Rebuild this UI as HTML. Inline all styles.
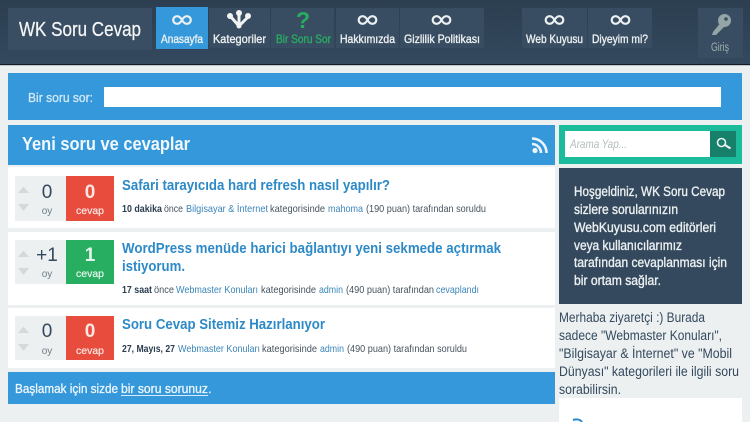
<!DOCTYPE html>
<html lang="tr"><head><meta charset="utf-8"><title>WK Soru Cevap</title>
<style>
html,body{margin:0;padding:0;width:750px;height:422px;overflow:hidden;background:#ecf0f1}
svg{display:block}
text{font-family:"Liberation Sans",sans-serif;white-space:pre}
.n{font-size:12px;fill:#ecf0f1;stroke:#ecf0f1;stroke-width:.35px}
.m{font-size:10.5px;fill:#45535f}
.mb{font-size:10.5px;font-weight:bold;fill:#2c3e50}
.l{font-size:10.5px;fill:#3a85b8}
.t{font-size:14.5px;font-weight:bold;fill:#2d8ac7}
.w{font-size:13.5px;fill:#ecf0f1;stroke:#ecf0f1;stroke-width:.35px}
.p{font-size:13.5px;fill:#34495e}
.c{font-size:19px;fill:#34495e;text-anchor:middle}
.o{font-size:10px;fill:#6d7b88;text-anchor:middle}
.a{fill:#d5d9db}
.b{font-size:13px;fill:#eef6fc;stroke:#eef6fc;stroke-width:.3px}
</style></head><body>
<svg xmlns="http://www.w3.org/2000/svg" width="750" height="422" viewBox="0 0 750 422">
<defs>
<linearGradient id="h" x1="0" y1="0" x2="0" y2="1"><stop offset="0" stop-color="#2c3e50"/><stop offset="1" stop-color="#34495e"/></linearGradient>
<g id="inf" fill="none" stroke="currentColor" stroke-width="2.200"><path d="M0 0C-2-3.600-3.600-3.800-5-3.800A3.800 3.800 0 0 0-5 3.800C-3.600 3.800-2 3.600 0 0C2-3.600 3.600-3.800 5-3.800A3.800 3.800 0 0 1 5 3.800C3.600 3.800 2 3.600 0 0Z"/></g>
</defs>
<rect width="750" height="422" fill="#ecf0f1"/>
<!-- header -->
<rect width="750" height="64" fill="url(#h)"/>
<rect y="64" width="750" height="1.2" fill="#141d27"/>
<rect x="8" y="8" width="144" height="42" fill="#3a4e63"/>
<text x="19" y="36" font-size="20" fill="#f4f6f6" stroke="#f4f6f6" stroke-width=".25" textLength="122" lengthAdjust="spacingAndGlyphs">WK Soru Cevap</text>
<g fill="#394d62">
<rect x="209" y="8" width="61" height="40"/><rect x="271" y="8" width="63" height="40"/><rect x="336" y="8" width="63" height="40"/><rect x="400" y="8" width="84" height="40"/><rect x="522" y="8" width="65" height="40"/><rect x="588" y="8" width="64" height="40"/><rect x="698" y="8" width="45" height="50"/>
</g>
<rect x="156" y="7" width="52" height="42" fill="#3498db"/>
<g color="#ecf0f1">
<use href="#inf" x="182" y="20"/><use href="#inf" x="367.500" y="20"/><use href="#inf" x="441.500" y="20"/><use href="#inf" x="554.500" y="20"/><use href="#inf" x="620.500" y="20"/>
</g>
<!-- tree icon -->
<g fill="#f2f4f4" stroke="#f2f4f4">
<path d="M239 14V26M231 17L239 26L248 17" fill="none" stroke-width="3"/>
<circle cx="239" cy="13" r="3" stroke="none"/><circle cx="230" cy="16" r="3" stroke="none"/><circle cx="248" cy="16" r="3" stroke="none"/><circle cx="239" cy="26" r="2.500" stroke="none"/>
</g>
<text x="303" y="28" font-size="23" font-weight="bold" fill="#27ae60" text-anchor="middle">?</text>
<!-- key -->
<g fill="#95a5a6"><path d="M713 32L722 21L726 25L716 35L712 35Z"/><circle cx="724.500" cy="20.500" r="6.500"/></g><circle cx="726" cy="19" r="1.800" fill="#394d62"/>
<text class="n" x="161" y="43" textLength="42" lengthAdjust="spacingAndGlyphs">Anasayfa</text>
<text class="n" x="213" y="43" textLength="53" lengthAdjust="spacingAndGlyphs">Kategoriler</text>
<text class="n" x="276" y="43" textLength="55" lengthAdjust="spacingAndGlyphs" style="fill:#27ae60;stroke:#27ae60">Bir Soru Sor</text>
<text class="n" x="340" y="43" textLength="55" lengthAdjust="spacingAndGlyphs">Hakkımızda</text>
<text class="n" x="404" y="43" textLength="76" lengthAdjust="spacingAndGlyphs">Gizlilik Politikası</text>
<text class="n" x="526" y="43" textLength="57" lengthAdjust="spacingAndGlyphs">Web Kuyusu</text>
<text class="n" x="592" y="43" textLength="56" lengthAdjust="spacingAndGlyphs">Diyeyim mi?</text>
<text x="711" y="51" font-size="11.500" fill="#a3b1b3" textLength="18" lengthAdjust="spacingAndGlyphs">Giriş</text>
<!-- ask bar -->
<rect x="8" y="73" width="734" height="47" fill="#3498db"/>
<text x="28" y="102" font-size="13" fill="#d4e8f6" stroke="#d4e8f6" stroke-width=".3" textLength="65" lengthAdjust="spacingAndGlyphs">Bir soru sor:</text>
<rect x="104" y="87" width="617" height="20" fill="#fff"/>
<!-- heading -->
<rect x="8" y="125" width="547" height="40" fill="#3498db"/>
<text x="22" y="150" font-size="18" font-weight="bold" fill="#f2f8fc" textLength="168" lengthAdjust="spacingAndGlyphs">Yeni soru ve cevaplar</text>
<g fill="none" stroke="#ecf4fa" stroke-width="2.600"><path d="M532 144A9 9 0 0 1 541 153"/><path d="M532 138.500A14.500 14.500 0 0 1 546.500 153"/></g><circle cx="535" cy="150.500" r="2.600" fill="#ecf4fa"/>
<!-- rows -->
<g fill="#fff"><rect x="8" y="167" width="547" height="61"/><rect x="8" y="232" width="547" height="73"/><rect x="8" y="308" width="547" height="60"/></g>
<g fill="#ecf0f1"><rect x="15" y="176" width="51" height="45"/><rect x="15" y="240" width="51" height="44"/><rect x="15" y="316" width="51" height="44"/></g>
<rect x="66" y="176" width="48" height="45" fill="#e74c3c"/><rect x="66" y="240" width="48" height="44" fill="#27ae60"/><rect x="66" y="316" width="48" height="44" fill="#e74c3c"/>
<g class="a">
<path d="M18 193L23.500 186.500L29 193ZM18 204L29 204L23.500 211Z"/>
<path d="M18 257L23.500 250.500L29 257ZM18 268L29 268L23.500 275Z"/>
<path d="M18 333L23.500 326.500L29 333ZM18 344L29 344L23.500 351Z"/>
</g>
<text class="c" x="47" y="198">0</text><text class="o" x="47" y="214">oy</text>
<text class="c" x="47" y="261">+1</text><text class="o" x="47" y="277">oy</text>
<text class="c" x="47" y="337">0</text><text class="o" x="47" y="354">oy</text>
<g fill="#fbe6e3" text-anchor="middle">
<text x="90" y="198" font-size="19" font-weight="bold">0</text><text x="90" y="214" font-size="10.500" stroke="#fbe6e3" stroke-width=".2">cevap</text>
<text x="90" y="261" font-size="19" font-weight="bold" fill="#e3f5ea">1</text><text x="90" y="277" font-size="10.500" fill="#e3f5ea" stroke="#e3f5ea" stroke-width=".2">cevap</text>
<text x="90" y="337" font-size="19" font-weight="bold">0</text><text x="90" y="354" font-size="10.500" stroke="#fbe6e3" stroke-width=".2">cevap</text>
</g>
<text class="t" x="122" y="190" textLength="268" lengthAdjust="spacingAndGlyphs">Safari tarayıcıda hard refresh nasıl yapılır?</text>
<text class="t" x="122" y="253" textLength="379" lengthAdjust="spacingAndGlyphs">WordPress menüde harici bağlantıyı yeni sekmede açtırmak</text>
<text class="t" x="122" y="271" textLength="63" lengthAdjust="spacingAndGlyphs">istiyorum.</text>
<text class="t" x="122" y="329" textLength="203" lengthAdjust="spacingAndGlyphs">Soru Cevap Sitemiz Hazırlanıyor</text>
<!-- meta 1 -->
<text class="mb" x="122" y="212" textLength="40" lengthAdjust="spacingAndGlyphs">10 dakika</text>
<text class="m" x="164" y="212" textLength="19" lengthAdjust="spacingAndGlyphs">önce</text>
<text class="l" x="186" y="212" textLength="82" lengthAdjust="spacingAndGlyphs">Bilgisayar &amp; İnternet</text>
<text class="m" x="270" y="212" textLength="55" lengthAdjust="spacingAndGlyphs">kategorisinde</text>
<text class="l" x="328" y="212" textLength="35" lengthAdjust="spacingAndGlyphs">mahoma</text>
<text class="m" x="366" y="212" textLength="120" lengthAdjust="spacingAndGlyphs">(190 puan) tarafından soruldu</text>
<!-- meta 2 -->
<text class="mb" x="122" y="293" textLength="30" lengthAdjust="spacingAndGlyphs">17 saat</text>
<text class="m" x="154" y="293" textLength="20" lengthAdjust="spacingAndGlyphs">önce</text>
<text class="l" x="176" y="293" textLength="82" lengthAdjust="spacingAndGlyphs">Webmaster Konuları</text>
<text class="m" x="261" y="293" textLength="55" lengthAdjust="spacingAndGlyphs">kategorisinde</text>
<text class="l" x="319" y="293" textLength="24" lengthAdjust="spacingAndGlyphs">admin</text>
<text class="m" x="346" y="293" textLength="88" lengthAdjust="spacingAndGlyphs">(490 puan) tarafından</text>
<text class="l" x="436" y="293" textLength="43" lengthAdjust="spacingAndGlyphs">cevaplandı</text>
<!-- meta 3 -->
<text class="mb" x="122" y="352" textLength="53" lengthAdjust="spacingAndGlyphs">27, Mayıs, 27</text>
<text class="l" x="178" y="352" textLength="82" lengthAdjust="spacingAndGlyphs">Webmaster Konuları</text>
<text class="m" x="262" y="352" textLength="55" lengthAdjust="spacingAndGlyphs">kategorisinde</text>
<text class="l" x="320" y="352" textLength="24" lengthAdjust="spacingAndGlyphs">admin</text>
<text class="m" x="347" y="352" textLength="120" lengthAdjust="spacingAndGlyphs">(490 puan) tarafından soruldu</text>
<!-- bottom bar -->
<rect x="8" y="372" width="547" height="32" fill="#3498db"/>
<text class="b" x="15" y="393" textLength="103" lengthAdjust="spacingAndGlyphs">Başlamak için sizde</text>
<text class="b" x="121" y="393" textLength="87" lengthAdjust="spacingAndGlyphs">bir soru sorunuz</text>
<text class="b" x="208" y="393">.</text>
<rect x="121" y="395" width="87" height="1" fill="#d7eaf8"/>
<!-- search -->
<rect x="559" y="125" width="183" height="39" fill="#1abc9c"/>
<rect x="565" y="131" width="145" height="26" fill="#fff"/>
<rect x="710" y="131" width="26" height="26" fill="#16806a"/>
<text x="570" y="148" font-size="11.500" font-style="italic" fill="#b4bcbe" textLength="57" lengthAdjust="spacingAndGlyphs">Arama Yap...</text>
<circle cx="721.500" cy="142.500" r="4" fill="none" stroke="#ecf0f1" stroke-width="1.600"/><path d="M725 145L730.500 148.500" stroke="#ecf0f1" stroke-width="2.200"/>
<!-- welcome -->
<rect x="559" y="168" width="183" height="136" fill="#34495e"/>
<text class="w" x="574" y="196" textLength="151" lengthAdjust="spacingAndGlyphs">Hoşgeldiniz, WK Soru Cevap</text>
<text class="w" x="574" y="214" textLength="104" lengthAdjust="spacingAndGlyphs">sizlere sorularınızın</text>
<text class="w" x="574" y="232" textLength="142" lengthAdjust="spacingAndGlyphs">WebKuyusu.com editörleri</text>
<text class="w" x="574" y="250" textLength="108" lengthAdjust="spacingAndGlyphs">veya kullanıcılarımız</text>
<text class="w" x="574" y="267" textLength="153" lengthAdjust="spacingAndGlyphs">tarafından cevaplanması için</text>
<text class="w" x="574" y="285" textLength="87" lengthAdjust="spacingAndGlyphs">bir ortam sağlar.</text>
<!-- intro -->
<text class="p" x="559" y="322" textLength="146" lengthAdjust="spacingAndGlyphs">Merhaba ziyaretçi :) Burada</text>
<text class="p" x="559" y="340" textLength="163" lengthAdjust="spacingAndGlyphs">sadece "Webmaster Konuları",</text>
<text class="p" x="559" y="358" textLength="173" lengthAdjust="spacingAndGlyphs">"Bilgisayar &amp; İnternet" ve "Mobil</text>
<text class="p" x="559" y="376" textLength="180" lengthAdjust="spacingAndGlyphs">Dünyası" kategorileri ile ilgili soru</text>
<text class="p" x="559" y="394" textLength="62" lengthAdjust="spacingAndGlyphs">sorabilirsin.</text>
<rect x="559" y="398" width="183" height="24" fill="#fff"/>
<path d="M573 420Q579 418 582 422" fill="none" stroke="#2d8ac7" stroke-width="2"/>
<text x="590" y="431" font-size="11" fill="#45535f" textLength="90" lengthAdjust="spacingAndGlyphs">Kategoriler listesi</text>
</svg>
</body></html>
